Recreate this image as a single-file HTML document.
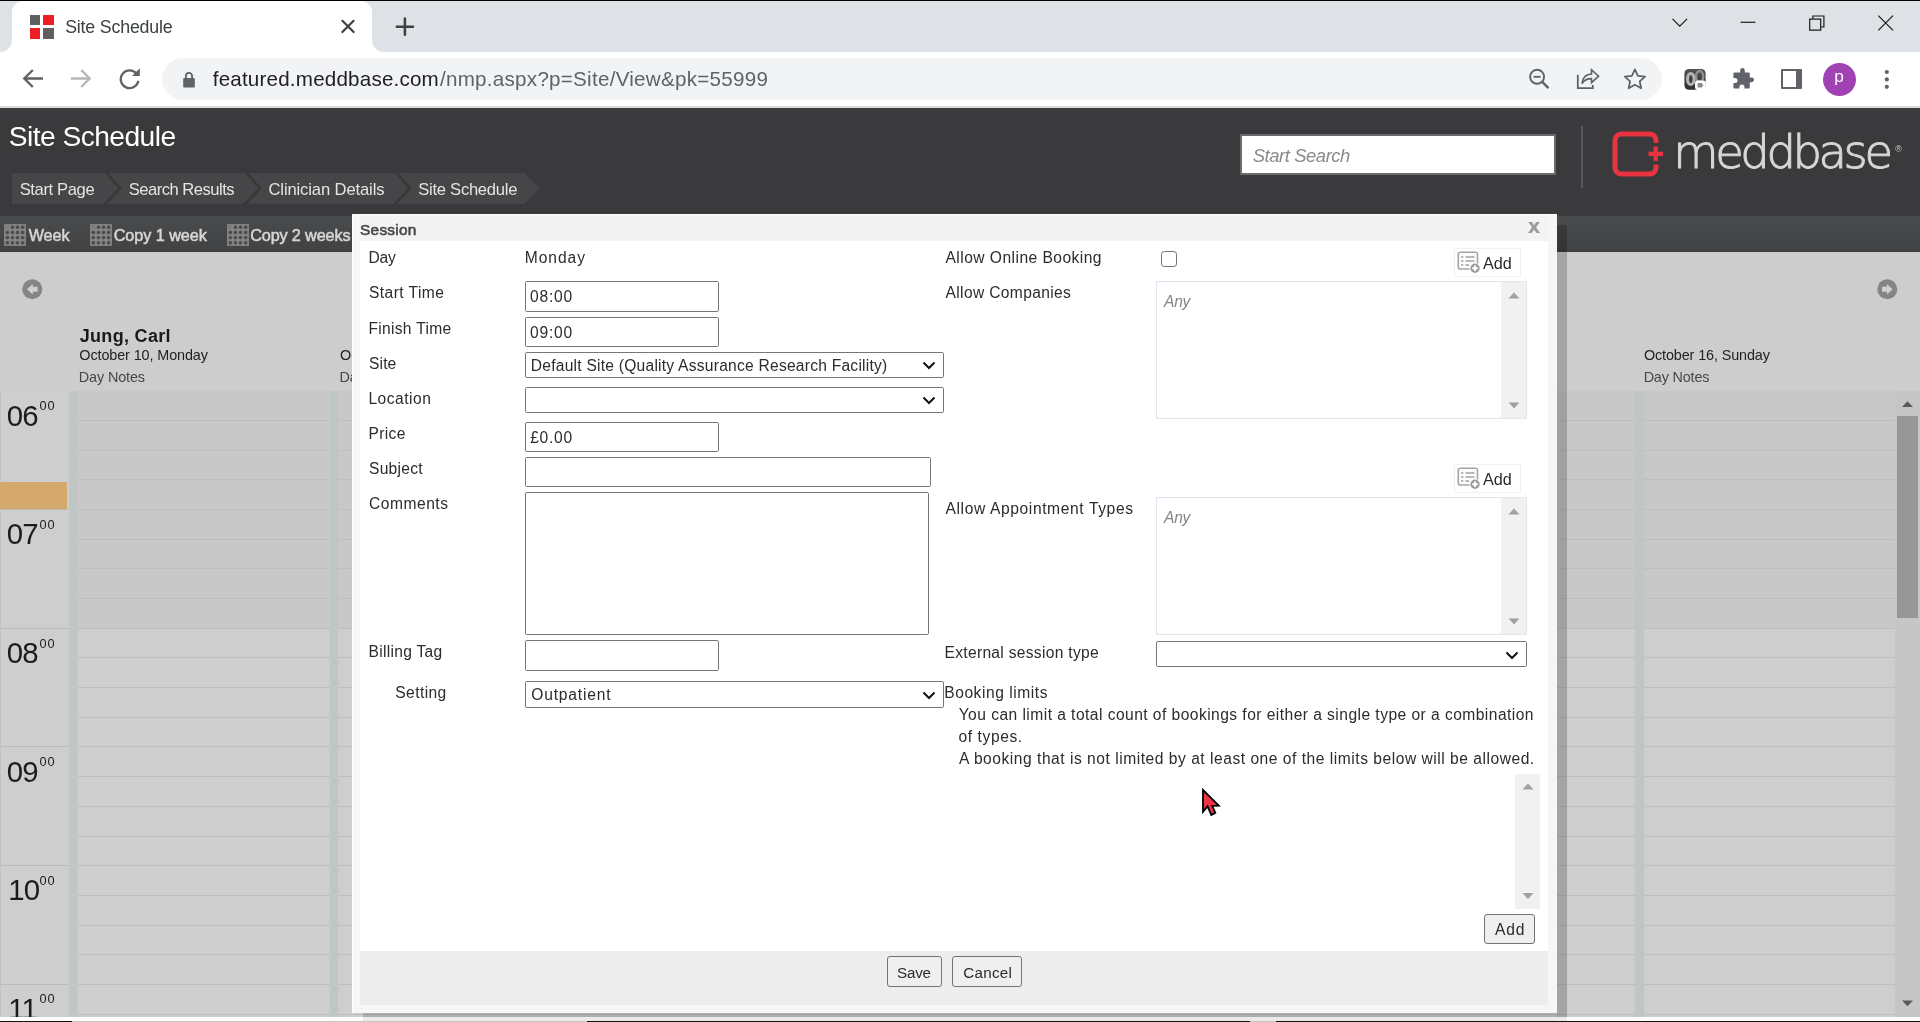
<!DOCTYPE html>
<html lang="en"><head><meta charset="utf-8"><title>Site Schedule</title>
<style>
html,body{margin:0;padding:0;}
body{width:1920px;height:1022px;overflow:hidden;position:relative;background:#fff;font-family:"Liberation Sans",sans-serif;}
.b{position:absolute;box-sizing:border-box;}
.t{position:absolute;white-space:pre;}
svg{position:absolute;overflow:visible;}
.inp{background:#fff;border:1px solid #767676;border-radius:1.8px;}
.btn{background:#efefef;border:1.3px solid #727272;border-radius:3px;}
.lst{background:#fff;border:1px solid #dee7f0;}
.trk{background:#f1f1f1;}
.line{position:absolute;height:1px;background:#bebebe;}
#root{position:absolute;left:0;top:0;width:1920px;height:1022px;overflow:hidden;will-change:transform;}

</style></head>
<body>
<div id="root">
<div class="b" style="left:0px;top:0px;width:1920px;height:52px;background:#dee1e6;"></div>
<div class="b" style="left:0px;top:0px;width:1920px;height:1px;background:#000;"></div>
<div class="b" style="left:12px;top:1px;width:360px;height:51px;background:#fff;border-radius:11px 11px 0 0;"></div>
<svg style="left:0;top:40px" width="390" height="12"><path d="M0 12 H12 V0 A12 12 0 0 1 0 12 Z" fill="#fff"/><path d="M384 12 H372 V0 A12 12 0 0 0 384 12 Z" fill="#fff"/></svg>
<div class="b" style="left:30px;top:15px;width:10.4px;height:10.4px;background:#5f5f61;"></div>
<div class="b" style="left:43.3px;top:15px;width:10.7px;height:10.4px;background:#ee1c25;"></div>
<div class="b" style="left:30px;top:28.4px;width:10.4px;height:10.6px;background:#ee1c25;"></div>
<div class="b" style="left:43.3px;top:28.4px;width:10.7px;height:10.6px;background:#5f5f61;"></div>
<span class="t" style="left:65.20px;top:16.05px;font-size:17.8px;line-height:23px;color:#3c4043;letter-spacing:-0.189px;">Site Schedule</span>
<svg style="left:340px;top:18px" width="16" height="16"><path d="M2.4 2.8 L13.6 14 M13.6 2.8 L2.4 14" stroke="#3c4043" stroke-width="2.2" stroke-linecap="round" fill="none"/></svg>
<svg style="left:395px;top:17px" width="20" height="20"><path d="M1.8 9.7 H18 M9.9 1.6 V17.8" stroke="#3c4043" stroke-width="2.5" stroke-linecap="round" fill="none"/></svg>
<svg style="left:1660px;top:8px" width="250" height="32" fill="none" stroke="#1b1b1b" stroke-width="1.200"><path d="M12.500 10.800 L19.800 18.100 L27.100 10.800"/><path d="M80.5 14.3 H95.5"/><path d="M149.7 11.2 H160.7 V22.2 H149.7 Z M152.9 11.2 V8 H163.9 V19 H160.7"/><path d="M218.3 7.7 L233 22.4 M233 7.7 L218.3 22.4"/></svg>
<div class="b" style="left:0px;top:52px;width:1920px;height:54px;background:#fff;"></div>
<div class="b" style="left:0px;top:106px;width:1920px;height:2px;background:#dcdcdc;"></div>
<div class="b" style="left:162px;top:58px;width:1500px;height:42px;background:#f1f3f4;border-radius:21px;"></div>
<svg style="left:20px;top:66px" width="130" height="26" fill="none" stroke-width="2.4" stroke-linecap="butt"><path d="M23 12.5 H4.5 M12.8 4 L4.3 12.5 L12.8 21" stroke="#5f6368"/><path d="M51 12.5 H69.5 M61.2 4 L69.7 12.5 L61.2 21" stroke="#b4b6b9"/><path d="M116.500 7.500 A8.900 8.900 0 1 0 118.400 14.900" stroke="#5f6368" stroke-width="2.300"/><path d="M119.800 2.300 V10 H112.100 Z" fill="#5f6368" stroke="none"/></svg>
<svg style="left:181px;top:70px" width="16" height="20"><rect x="2.2" y="8" width="11.6" height="9.6" rx="1.2" fill="#5f6368"/><path d="M4.9 8.5 V6 A3.1 3.1 0 0 1 11.1 6 V8.5" fill="none" stroke="#5f6368" stroke-width="1.8"/></svg>
<span class="t" style="left:212.74px;top:65.05px;font-size:20.6px;line-height:27px;color:#202124;letter-spacing:0.196px;">featured.meddbase.com</span>
<span class="t" style="left:440.00px;top:65.05px;font-size:20.6px;line-height:27px;color:#5f6368;letter-spacing:0.264px;">/nmp.aspx?p=Site/View&amp;pk=55999</span>
<svg style="left:1526px;top:66px" width="130" height="28" fill="none" stroke="#5f6368" stroke-width="1.9"><circle cx="11.100" cy="10.800" r="7"/><path d="M16.200 15.900 L22.500 22.200" stroke-width="2.400"/><path d="M7.600 10.800 H14.600" stroke-width="1.800"/><path d="M51.800 8.800 V22.100 H66.800 V19" stroke-width="1.800"/><path d="M56 17.500 C56.600 11.800 60.200 8.300 65.500 8 V3.700 L72.600 10.200 L65.500 16.700 V12.600 C61.500 12.500 58.300 14 56 17.500 Z" stroke-width="1.600"/><path d="M108.900 3.400 L111.900 9.900 L119 10.600 L113.700 15.400 L115.200 22.300 L108.900 18.700 L102.600 22.300 L104.100 15.400 L98.800 10.600 L105.900 9.900 Z" stroke-width="1.800" stroke-linejoin="round"/></svg>
<svg style="left:1684px;top:68.500px" width="24" height="22" fill="none"><defs><clipPath id="ec"><rect x="0.400" y="0" width="21.200" height="20.800" rx="4.500"/></clipPath><linearGradient id="eg" x1="0" y1="0" x2="0" y2="1"><stop offset="0" stop-color="#515151"/><stop offset="1" stop-color="#2e2e2e"/></linearGradient></defs><g clip-path="url(#ec)"><rect width="22" height="21" fill="url(#eg)"/><ellipse cx="15.600" cy="7.500" rx="3.600" ry="5.400" stroke="#8e8e8e" stroke-width="2.600"/><ellipse cx="6.800" cy="10" rx="3.300" ry="5.600" stroke="#b4b4b4" stroke-width="3"/></g><rect x="11" y="11.400" width="10.800" height="9.600" rx="2.400" fill="#fff"/><path d="M13.600 13.900 H17.600 L19.400 16.200 L17.600 18.500 H13.600 Z" fill="#8a8a8a"/></svg>
<svg style="left:1729.800px;top:67px" width="24" height="24"><path d="M10.2 3.4 a2.3 2.3 0 0 1 4.6 0 V5.6 H18.6 a1.2 1.2 0 0 1 1.2 1.2 V10.4 H21.6 a2.4 2.4 0 0 1 0 4.8 H19.8 V20.3 a1.2 1.2 0 0 1 -1.2 1.2 H14.4 V19.9 a2.5 2.5 0 0 0 -5 0 V21.5 H4.6 a1.2 1.2 0 0 1 -1.2 -1.2 V16.1 H5 a2.5 2.5 0 0 0 0 -5 H3.4 V6.8 a1.2 1.2 0 0 1 1.2 -1.2 H10.2 Z" fill="#5f6368"/></svg>
<div class="b" style="left:1780.6px;top:68.6px;width:21px;height:20.8px;border:2.600px solid #5f6368;border-right-width:6.800px;border-radius:1px;"></div>
<div class="b" style="left:1823px;top:63px;width:33px;height:33px;background:#a142b4;border-radius:50%;"></div>
<span class="t" style="left:1834.22px;top:65.04px;font-size:17.3px;line-height:22px;color:#fff;">p</span>
<svg style="left:1882.200px;top:66.800px" width="10" height="26" fill="#5f6368"><circle cx="4.8" cy="5" r="2.1"/><circle cx="4.8" cy="12.4" r="2.1"/><circle cx="4.8" cy="19.8" r="2.1"/></svg>
<div class="b" style="left:0px;top:108px;width:1920px;height:108px;background:#3a3a3c;"></div>
<span class="t" style="left:8.73px;top:118.04px;font-size:28.2px;line-height:37px;color:#fff;letter-spacing:-0.544px;">Site Schedule</span>
<svg style="left:0;top:173px" width="560" height="31"><path d="M12 0 H524.500 L540 15.500 L524.500 31 H12 Z" fill="#464648"/><g fill="none" stroke="#38383a" stroke-width="2.6"><path d="M106 -1 L120 15.5 L104 32"/><path d="M246 -1 L260 15.5 L244 32"/><path d="M396 -1 L410 15.500 L394 32"/></g></svg>
<span class="t" style="left:19.65px;top:179.05px;font-size:16.6px;line-height:22px;color:#e4e4e4;letter-spacing:-0.376px;">Start Page</span>
<span class="t" style="left:128.75px;top:179.05px;font-size:16.6px;line-height:22px;color:#e4e4e4;letter-spacing:-0.517px;">Search Results</span>
<span class="t" style="left:268.47px;top:179.05px;font-size:16.6px;line-height:22px;color:#e4e4e4;letter-spacing:-0.125px;">Clinician Details</span>
<span class="t" style="left:418.25px;top:179.05px;font-size:16.6px;line-height:22px;color:#e4e4e4;letter-spacing:-0.272px;">Site Schedule</span>
<div class="b" style="left:1240px;top:134px;width:316px;height:41px;background:#fff;border:2px solid #6b6b6d;"></div>
<span class="t" style="left:1252.79px;top:144.05px;font-size:18.4px;line-height:24px;color:#8a8a8a;letter-spacing:-0.425px;font-style:italic;">Start Search</span>
<div class="b" style="left:1581px;top:126px;width:2px;height:62px;background:#58585a;"></div>
<svg style="left:1605px;top:125px" width="70" height="60" fill="none" stroke="#ea3340"><path d="M51 18 V15.5 A6.6 6.6 0 0 0 44.4 8.9 H16.6 A6.6 6.6 0 0 0 10 15.5 V42.5 A6.6 6.6 0 0 0 16.600 49.1 H44.4 A6.6 6.6 0 0 0 51 42.500 V39.500" stroke-width="5"/><path d="M43.5 28.800 H58 M50.700 21.600 V36" stroke-width="4.2"/></svg>
<span class="t" style="left:1673.27px;top:122.05px;font-size:46.5px;line-height:60px;color:#d6d6d6;letter-spacing:-3.437px;font-family:'DejaVu Sans', sans-serif;font-weight:200;-webkit-text-stroke:1px #d6d6d6;">meddbase</span>
<span class="t" style="left:1895.37px;top:143.04px;font-size:9px;line-height:12px;color:#cfcfcf;">®</span>
<div class="b" style="left:0px;top:216px;width:1920px;height:36px;background:linear-gradient(#494b4d,#404244);border-bottom:1px solid #3a3c3e;"></div>
<svg style="left:4px;top:224px" width="22" height="22"><rect width="22" height="22" fill="#7e7e7e"/><g fill="none" stroke="#8c8c8c" stroke-width="0.8"><path d="M5.9 0 V22 M11 0 V22 M16.100 0 V22 M0 5.900 H22 M0 11 H22 M0 16.100 H22"/></g><g fill="#4b4b4b"><circle cx="8.45" cy="3.30" r="1.7"/><circle cx="13.50" cy="3.30" r="1.7"/><circle cx="18.55" cy="3.30" r="1.7"/><circle cx="3.40" cy="8.45" r="1.7"/><circle cx="8.45" cy="8.45" r="1.7"/><circle cx="13.50" cy="8.45" r="1.7"/><circle cx="18.55" cy="8.45" r="1.7"/><circle cx="3.40" cy="13.60" r="1.7"/><circle cx="8.45" cy="13.60" r="1.7"/><circle cx="13.50" cy="13.60" r="1.7"/><circle cx="18.55" cy="13.60" r="1.7"/><circle cx="3.40" cy="18.75" r="1.7"/><circle cx="8.45" cy="18.75" r="1.7"/><circle cx="13.50" cy="18.75" r="1.7"/><circle cx="18.55" cy="18.75" r="1.7"/></g></svg>
<span class="t" style="left:28.66px;top:225.04px;font-size:16.2px;line-height:21px;color:#d6d6d6;letter-spacing:-0.036px;-webkit-text-stroke:0.55px #d6d6d6;">Week</span>
<svg style="left:90px;top:224px" width="22" height="22"><rect width="22" height="22" fill="#7e7e7e"/><g fill="none" stroke="#8c8c8c" stroke-width="0.8"><path d="M5.9 0 V22 M11 0 V22 M16.100 0 V22 M0 5.900 H22 M0 11 H22 M0 16.100 H22"/></g><g fill="#4b4b4b"><circle cx="8.45" cy="3.30" r="1.7"/><circle cx="13.50" cy="3.30" r="1.7"/><circle cx="18.55" cy="3.30" r="1.7"/><circle cx="3.40" cy="8.45" r="1.7"/><circle cx="8.45" cy="8.45" r="1.7"/><circle cx="13.50" cy="8.45" r="1.7"/><circle cx="18.55" cy="8.45" r="1.7"/><circle cx="3.40" cy="13.60" r="1.7"/><circle cx="8.45" cy="13.60" r="1.7"/><circle cx="13.50" cy="13.60" r="1.7"/><circle cx="18.55" cy="13.60" r="1.7"/><circle cx="3.40" cy="18.75" r="1.7"/><circle cx="8.45" cy="18.75" r="1.7"/><circle cx="13.50" cy="18.75" r="1.7"/><circle cx="18.55" cy="18.75" r="1.7"/></g></svg>
<span class="t" style="left:113.69px;top:225.04px;font-size:16.2px;line-height:21px;color:#d6d6d6;letter-spacing:-0.037px;-webkit-text-stroke:0.55px #d6d6d6;">Copy 1 week</span>
<svg style="left:227px;top:224px" width="22" height="22"><rect width="22" height="22" fill="#7e7e7e"/><g fill="none" stroke="#8c8c8c" stroke-width="0.8"><path d="M5.9 0 V22 M11 0 V22 M16.100 0 V22 M0 5.900 H22 M0 11 H22 M0 16.100 H22"/></g><g fill="#4b4b4b"><circle cx="8.45" cy="3.30" r="1.7"/><circle cx="13.50" cy="3.30" r="1.7"/><circle cx="18.55" cy="3.30" r="1.7"/><circle cx="3.40" cy="8.45" r="1.7"/><circle cx="8.45" cy="8.45" r="1.7"/><circle cx="13.50" cy="8.45" r="1.7"/><circle cx="18.55" cy="8.45" r="1.7"/><circle cx="3.40" cy="13.60" r="1.7"/><circle cx="8.45" cy="13.60" r="1.7"/><circle cx="13.50" cy="13.60" r="1.7"/><circle cx="18.55" cy="13.60" r="1.7"/><circle cx="3.40" cy="18.75" r="1.7"/><circle cx="8.45" cy="18.75" r="1.7"/><circle cx="13.50" cy="18.75" r="1.7"/><circle cx="18.55" cy="18.75" r="1.7"/></g></svg>
<span class="t" style="left:250.19px;top:225.04px;font-size:16.2px;line-height:21px;color:#d6d6d6;letter-spacing:-0.124px;-webkit-text-stroke:0.55px #d6d6d6;">Copy 2 weeks</span>
<div class="b" style="left:0px;top:252px;width:1920px;height:139px;background:#cdcdcd;"></div>
<div class="b" style="left:0px;top:391px;width:1920px;height:626px;background:#c8c8c8;"></div>
<div class="b" style="left:0px;top:391px;width:69px;height:626px;background:#cecece;border-left:1px solid #c2c2c2;"></div>
<svg style="left:22px;top:279px" width="21" height="21"><circle cx="10.3" cy="10.3" r="10" fill="#858585"/><path d="M5 10.300 L10.800 5 V7.800 H15.600 V12.800 H10.800 V15.600 Z" fill="#d0d0d0"/></svg>
<svg style="left:1877px;top:279px" width="21" height="21"><circle cx="10.3" cy="10.3" r="10" fill="#858585"/><path d="M15.600 10.300 L9.800 5 V7.800 H5 V12.800 H9.800 V15.600 Z" fill="#d0d0d0"/></svg>
<div class="b" style="left:78px;top:628px;width:1817px;height:389px;background:#cecece;"></div>
<div class="line" style="left:78px;top:420.0px;width:1817px;"></div><div class="line" style="left:78px;top:450.0px;width:1817px;"></div><div class="line" style="left:78px;top:479.0px;width:1817px;"></div><div class="line" style="left:78px;top:509.0px;width:1817px;"></div><div class="line" style="left:0px;top:509.0px;width:69px;background:#bcbcbc;"></div><div class="line" style="left:78px;top:539.0px;width:1817px;"></div><div class="line" style="left:78px;top:568.0px;width:1817px;"></div><div class="line" style="left:78px;top:598.0px;width:1817px;"></div><div class="line" style="left:78px;top:628.0px;width:1817px;"></div><div class="line" style="left:0px;top:628.0px;width:69px;background:#bcbcbc;"></div><div class="line" style="left:78px;top:657.0px;width:1817px;"></div><div class="line" style="left:78px;top:687.0px;width:1817px;"></div><div class="line" style="left:78px;top:717.0px;width:1817px;"></div><div class="line" style="left:78px;top:746.0px;width:1817px;"></div><div class="line" style="left:0px;top:746.0px;width:69px;background:#bcbcbc;"></div><div class="line" style="left:78px;top:776.0px;width:1817px;"></div><div class="line" style="left:78px;top:806.0px;width:1817px;"></div><div class="line" style="left:78px;top:836.0px;width:1817px;"></div><div class="line" style="left:78px;top:865.0px;width:1817px;"></div><div class="line" style="left:0px;top:865.0px;width:69px;background:#bcbcbc;"></div><div class="line" style="left:78px;top:895.0px;width:1817px;"></div><div class="line" style="left:78px;top:925.0px;width:1817px;"></div><div class="line" style="left:78px;top:954.0px;width:1817px;"></div><div class="line" style="left:78px;top:984.0px;width:1817px;"></div><div class="line" style="left:0px;top:984.0px;width:69px;background:#bcbcbc;"></div><div class="line" style="left:78px;top:1014.0px;width:1817px;"></div>
<div class="b" style="left:69px;top:391px;width:8.4px;height:626px;background:#c0c5c6;"></div>
<div class="b" style="left:330.1px;top:391px;width:8.4px;height:626px;background:#c0c5c6;"></div>
<div class="b" style="left:1635.4px;top:391px;width:8.4px;height:626px;background:#c0c5c6;"></div>
<div class="b" style="left:0px;top:482px;width:67px;height:27px;background:#d4a96b;"></div>
<span class="t" style="left:6.70px;top:397.05px;font-size:29.4px;line-height:38px;color:#1c1c1c;letter-spacing:-0.9px;">06</span>
<span class="t" style="left:39.52px;top:397.05px;font-size:12.8px;line-height:17px;color:#1c1c1c;letter-spacing:0.752px;">00</span>
<span class="t" style="left:6.70px;top:515.05px;font-size:29.4px;line-height:38px;color:#1c1c1c;letter-spacing:-0.9px;">07</span>
<span class="t" style="left:39.52px;top:516.05px;font-size:12.8px;line-height:17px;color:#1c1c1c;letter-spacing:0.752px;">00</span>
<span class="t" style="left:6.70px;top:634.05px;font-size:29.4px;line-height:38px;color:#1c1c1c;letter-spacing:-0.9px;">08</span>
<span class="t" style="left:39.52px;top:635.05px;font-size:12.8px;line-height:17px;color:#1c1c1c;letter-spacing:0.752px;">00</span>
<span class="t" style="left:6.70px;top:753.05px;font-size:29.4px;line-height:38px;color:#1c1c1c;letter-spacing:-0.9px;">09</span>
<span class="t" style="left:39.52px;top:753.05px;font-size:12.8px;line-height:17px;color:#1c1c1c;letter-spacing:0.752px;">00</span>
<span class="t" style="left:8.20px;top:871.05px;font-size:29.4px;line-height:38px;color:#1c1c1c;letter-spacing:-0.9px;">10</span>
<span class="t" style="left:39.52px;top:872.05px;font-size:12.8px;line-height:17px;color:#1c1c1c;letter-spacing:0.752px;">00</span>
<span class="t" style="left:8.20px;top:990.05px;font-size:29.4px;line-height:38px;color:#1c1c1c;letter-spacing:-0.9px;">11</span>
<span class="t" style="left:39.52px;top:990.05px;font-size:12.8px;line-height:17px;color:#1c1c1c;letter-spacing:0.752px;">00</span>
<span class="t" style="left:79.73px;top:325.05px;font-size:18px;line-height:23px;color:#1a1a1a;letter-spacing:0.312px;font-weight:bold;">Jung, Carl</span>
<span class="t" style="left:79.35px;top:346.04px;font-size:14.4px;line-height:19px;color:#222;letter-spacing:-0.107px;">October 10, Monday</span>
<span class="t" style="left:78.85px;top:368.04px;font-size:14.4px;line-height:19px;color:#484848;letter-spacing:-0.132px;">Day Notes</span>
<span class="t" style="left:340.05px;top:346.04px;font-size:14.4px;line-height:19px;color:#222;">October 11, Tuesday</span>
<span class="t" style="left:339.55px;top:368.04px;font-size:14.4px;line-height:19px;color:#484848;letter-spacing:-0.132px;">Day Notes</span>
<span class="t" style="left:1643.95px;top:346.04px;font-size:14.4px;line-height:19px;color:#222;letter-spacing:-0.120px;">October 16, Sunday</span>
<span class="t" style="left:1643.65px;top:368.04px;font-size:14.4px;line-height:19px;color:#484848;letter-spacing:-0.169px;">Day Notes</span>
<div class="b" style="left:1895px;top:391px;width:25px;height:626px;background:#c6c6c6;"></div>
<div class="b" style="left:1897px;top:416px;width:21px;height:202px;background:#979797;"></div>
<svg style="left:1895px;top:391px" width="25" height="626" fill="#5a5a5a"><path d="M7 16 L12.500 10.300 L18 16 Z"/><path d="M7 609.500 L12.500 615.200 L18 609.500 Z"/></svg>
<div class="b" style="left:0px;top:1017px;width:1920px;height:5px;background:#fff;border-bottom:1px solid #c4c4c4;"></div>
<div class="b" style="left:0px;top:1021px;width:72px;height:1px;background:#111;"></div>
<div class="b" style="left:587px;top:1021px;width:663px;height:1px;background:#111;"></div>
<div class="b" style="left:1276px;top:1021px;width:644px;height:1px;background:#111;"></div>
<div class="b" style="left:1557px;top:225px;width:10px;height:792px;background:rgba(0,0,0,0.2);"></div>
<div class="b" style="left:363px;top:1013px;width:1194px;height:4px;background:rgba(0,0,0,0.15);"></div>
<div class="b" style="left:363px;top:1017px;width:1204px;height:4px;background:rgba(0,0,0,0.08);"></div>
<div class="b" style="left:352px;top:214px;width:1205px;height:799px;background:#f6f6f6;border-top:1px solid #fff;border-left:1px solid #fff;"></div>
<div class="b" style="left:360px;top:216px;width:1188px;height:25px;background:#f3f3f3;"></div>
<div class="b" style="left:360px;top:951px;width:1188px;height:54px;background:#ededed;"></div>
<div class="b" style="left:360px;top:241px;width:1188px;height:710px;background:#fff;"></div>
<span class="t" style="left:360.01px;top:220.04px;font-size:15.4px;line-height:20px;color:#474747;letter-spacing:0.278px;-webkit-text-stroke:0.6px #474747;">Session</span>
<span class="t" style="left:1527.71px;top:214.04px;font-size:19.5px;line-height:25px;color:#9c9c9c;font-weight:bold;font-family:'DejaVu Sans', sans-serif;">x</span>
<span class="t" style="left:368.45px;top:248.05px;font-size:15.6px;line-height:20px;color:#2c2c2c;letter-spacing:-0.241px;">Day</span>
<span class="t" style="left:524.75px;top:248.05px;font-size:15.6px;line-height:20px;color:#2c2c2c;letter-spacing:0.950px;">Monday</span>
<span class="t" style="left:369.00px;top:283.05px;font-size:15.6px;line-height:20px;color:#2c2c2c;letter-spacing:0.434px;">Start Time</span>
<span class="t" style="left:368.45px;top:319.05px;font-size:15.6px;line-height:20px;color:#2c2c2c;letter-spacing:0.296px;">Finish Time</span>
<span class="t" style="left:369.00px;top:354.05px;font-size:15.6px;line-height:20px;color:#2c2c2c;letter-spacing:0.131px;">Site</span>
<span class="t" style="left:368.45px;top:389.05px;font-size:15.6px;line-height:20px;color:#2c2c2c;letter-spacing:0.508px;">Location</span>
<span class="t" style="left:368.45px;top:424.05px;font-size:15.6px;line-height:20px;color:#2c2c2c;letter-spacing:0.345px;">Price</span>
<span class="t" style="left:369.00px;top:459.05px;font-size:15.6px;line-height:20px;color:#2c2c2c;letter-spacing:0.259px;">Subject</span>
<span class="t" style="left:368.92px;top:494.05px;font-size:15.6px;line-height:20px;color:#2c2c2c;letter-spacing:0.529px;">Comments</span>
<span class="t" style="left:368.45px;top:642.05px;font-size:15.6px;line-height:20px;color:#2c2c2c;letter-spacing:0.300px;">Billing Tag</span>
<span class="t" style="left:395.30px;top:683.05px;font-size:15.6px;line-height:20px;color:#2c2c2c;letter-spacing:0.404px;">Setting</span>
<div class="b inp" style="left:525px;top:281px;width:194px;height:31px;"></div>
<span class="t" style="left:530.01px;top:287.05px;font-size:15.6px;line-height:20px;color:#2c2c2c;letter-spacing:0.783px;">08:00</span>
<div class="b inp" style="left:525px;top:317px;width:194px;height:30px;"></div>
<span class="t" style="left:530.01px;top:323.05px;font-size:15.6px;line-height:20px;color:#2c2c2c;letter-spacing:0.783px;">09:00</span>
<div class="b inp" style="left:525px;top:352px;width:419px;height:26px;"><svg style="right:7px;top:8px" width="14" height="9"><path d="M1.500 1.500 L7 7 L12.500 1.500" fill="none" stroke="#111" stroke-width="2"/></svg></div>
<span class="t" style="left:530.75px;top:356.05px;font-size:15.6px;line-height:20px;color:#2c2c2c;letter-spacing:0.237px;">Default Site (Quality Assurance Research Facility)</span>
<div class="b inp" style="left:525px;top:387px;width:419px;height:26px;"><svg style="right:7px;top:8px" width="14" height="9"><path d="M1.500 1.500 L7 7 L12.500 1.500" fill="none" stroke="#111" stroke-width="2"/></svg></div>
<div class="b inp" style="left:525px;top:422px;width:194px;height:30px;"></div>
<span class="t" style="left:530.17px;top:428.05px;font-size:15.6px;line-height:20px;color:#2c2c2c;letter-spacing:0.744px;">£0.00</span>
<div class="b inp" style="left:525px;top:457px;width:406px;height:30px;"></div>
<div class="b inp" style="left:525px;top:492px;width:404px;height:143px;"></div>
<div class="b inp" style="left:525px;top:640px;width:194px;height:31px;"></div>
<div class="b inp" style="left:525px;top:681px;width:419px;height:27px;"><svg style="right:7px;top:9px" width="14" height="9"><path d="M1.500 1.500 L7 7 L12.500 1.500" fill="none" stroke="#111" stroke-width="2"/></svg></div>
<span class="t" style="left:531.30px;top:685.05px;font-size:15.6px;line-height:20px;color:#2c2c2c;letter-spacing:0.810px;">Outpatient</span>
<span class="t" style="left:945.50px;top:248.05px;font-size:15.6px;line-height:20px;color:#2c2c2c;letter-spacing:0.456px;">Allow Online Booking</span>
<div class="b" style="left:1161px;top:250.8px;width:16.2px;height:16.2px;border:1.3px solid #747474;border-radius:3.2px;background:#fff;"></div>
<div class="b" style="left:1454px;top:248px;width:67px;height:29px;background:#fff;border:1px solid #eef1f5;"></div>
<svg style="left:1457px;top:251px" width="26" height="24"><rect x="1.300" y="1.300" width="19.200" height="16.700" rx="1.800" fill="#fdfdfd" stroke="#a6a6a6" stroke-width="1.600"/><g stroke="#a2a2a2" stroke-width="1.700"><path d="M4 6 H6.300 M8.500 6 H17.500 M4 10 H6.300 M8.500 10 H17.500 M4 14 H6.300 M8.500 14 H12"/></g><circle cx="18" cy="17.300" r="5.600" fill="#fff"/><circle cx="18" cy="17.300" r="4.700" fill="#9c9c9c"/><path d="M15.200 17.300 H20.800 M18 14.500 V20.100" stroke="#fff" stroke-width="2.100"/></svg>
<span class="t" style="left:1483.00px;top:253.04px;font-size:16.2px;line-height:21px;color:#2c2c2c;letter-spacing:0.008px;">Add</span>
<span class="t" style="left:945.50px;top:283.05px;font-size:15.6px;line-height:20px;color:#2c2c2c;letter-spacing:0.353px;">Allow Companies</span>
<div class="b lst" style="left:1156px;top:281px;width:371px;height:138px;"><div class="b trk" style="right:0;top:0;width:25px;height:100%"></div></div>
<svg style="left:1507.5px;top:289.5px" width="12" height="124" fill="#a0a0a0"><path d="M0.500 8.500 L6 2.500 L11.500 8.500 Z"/><path d="M0.500 112.5 L6 118.5 L11.500 112.5 Z"/></svg>
<span class="t" style="left:1163.98px;top:292.05px;font-size:15.6px;line-height:20px;color:#868686;letter-spacing:-0.235px;font-style:italic;">Any</span>
<div class="b" style="left:1454px;top:464px;width:67px;height:29px;background:#fff;border:1px solid #eef1f5;"></div>
<svg style="left:1457px;top:467px" width="26" height="24"><rect x="1.300" y="1.300" width="19.200" height="16.700" rx="1.800" fill="#fdfdfd" stroke="#a6a6a6" stroke-width="1.600"/><g stroke="#a2a2a2" stroke-width="1.700"><path d="M4 6 H6.300 M8.500 6 H17.500 M4 10 H6.300 M8.500 10 H17.500 M4 14 H6.300 M8.500 14 H12"/></g><circle cx="18" cy="17.300" r="5.600" fill="#fff"/><circle cx="18" cy="17.300" r="4.700" fill="#9c9c9c"/><path d="M15.200 17.300 H20.800 M18 14.500 V20.100" stroke="#fff" stroke-width="2.100"/></svg>
<span class="t" style="left:1483.00px;top:469.04px;font-size:16.2px;line-height:21px;color:#2c2c2c;letter-spacing:0.008px;">Add</span>
<span class="t" style="left:945.50px;top:499.05px;font-size:15.6px;line-height:20px;color:#2c2c2c;letter-spacing:0.615px;">Allow Appointment Types</span>
<div class="b lst" style="left:1156px;top:497px;width:371px;height:138px;"><div class="b trk" style="right:0;top:0;width:25px;height:100%"></div></div>
<svg style="left:1507.5px;top:505.5px" width="12" height="124" fill="#a0a0a0"><path d="M0.500 8.500 L6 2.500 L11.500 8.500 Z"/><path d="M0.500 112.5 L6 118.5 L11.500 112.5 Z"/></svg>
<span class="t" style="left:1163.98px;top:508.05px;font-size:15.6px;line-height:20px;color:#868686;letter-spacing:-0.235px;font-style:italic;">Any</span>
<span class="t" style="left:944.55px;top:643.05px;font-size:15.6px;line-height:20px;color:#2c2c2c;letter-spacing:0.292px;">External session type</span>
<div class="b inp" style="left:1156px;top:641px;width:371px;height:26px;"><svg style="right:7px;top:9px" width="14" height="9"><path d="M1.500 1.500 L7 7 L12.500 1.500" fill="none" stroke="#111" stroke-width="2"/></svg></div>
<span class="t" style="left:944.25px;top:683.05px;font-size:15.6px;line-height:20px;color:#2c2c2c;letter-spacing:0.542px;">Booking limits</span>
<span class="t" style="left:958.69px;top:705.05px;font-size:15.6px;line-height:20px;color:#2c2c2c;letter-spacing:0.453px;">You can limit a total count of bookings for either a single type or a combination</span>
<span class="t" style="left:958.38px;top:727.05px;font-size:15.6px;line-height:20px;color:#2c2c2c;letter-spacing:0.607px;">of types.</span>
<span class="t" style="left:959.00px;top:749.05px;font-size:15.6px;line-height:20px;color:#2c2c2c;letter-spacing:0.520px;">A booking that is not limited by at least one of the limits below will be allowed.</span>
<div class="b trk" style="left:1515px;top:774px;width:25px;height:135px;"></div>
<svg style="left:1521.5px;top:781px" width="12" height="124" fill="#a0a0a0"><path d="M0.500 8.500 L6 2.500 L11.500 8.500 Z"/><path d="M0.500 112 L6 118 L11.500 112 Z"/></svg>
<div class="b btn" style="left:1484px;top:914px;width:51px;height:30px;"></div>
<span class="t" style="left:1495.00px;top:920.05px;font-size:15.6px;line-height:20px;color:#2c2c2c;letter-spacing:0.873px;">Add</span>
<div class="b btn" style="left:887px;top:956px;width:55px;height:31px;"></div>
<span class="t" style="left:897.12px;top:963.05px;font-size:15.2px;line-height:20px;color:#2c2c2c;letter-spacing:-0.263px;">Save</span>
<div class="b btn" style="left:952px;top:956px;width:70px;height:31px;"></div>
<span class="t" style="left:963.24px;top:963.05px;font-size:15.2px;line-height:20px;color:#2c2c2c;letter-spacing:0.288px;">Cancel</span>
<svg style="left:1190px;top:780px" width="40" height="45"><path d="M13 10 V31.700 L17.600 26.300 L21.300 34.900 L25.300 32.800 L22.200 25.900 L28.800 25.700 Z" fill="#f03545" stroke="#000" stroke-width="1.800" stroke-linejoin="miter"/></svg>
</div>
</body></html>
